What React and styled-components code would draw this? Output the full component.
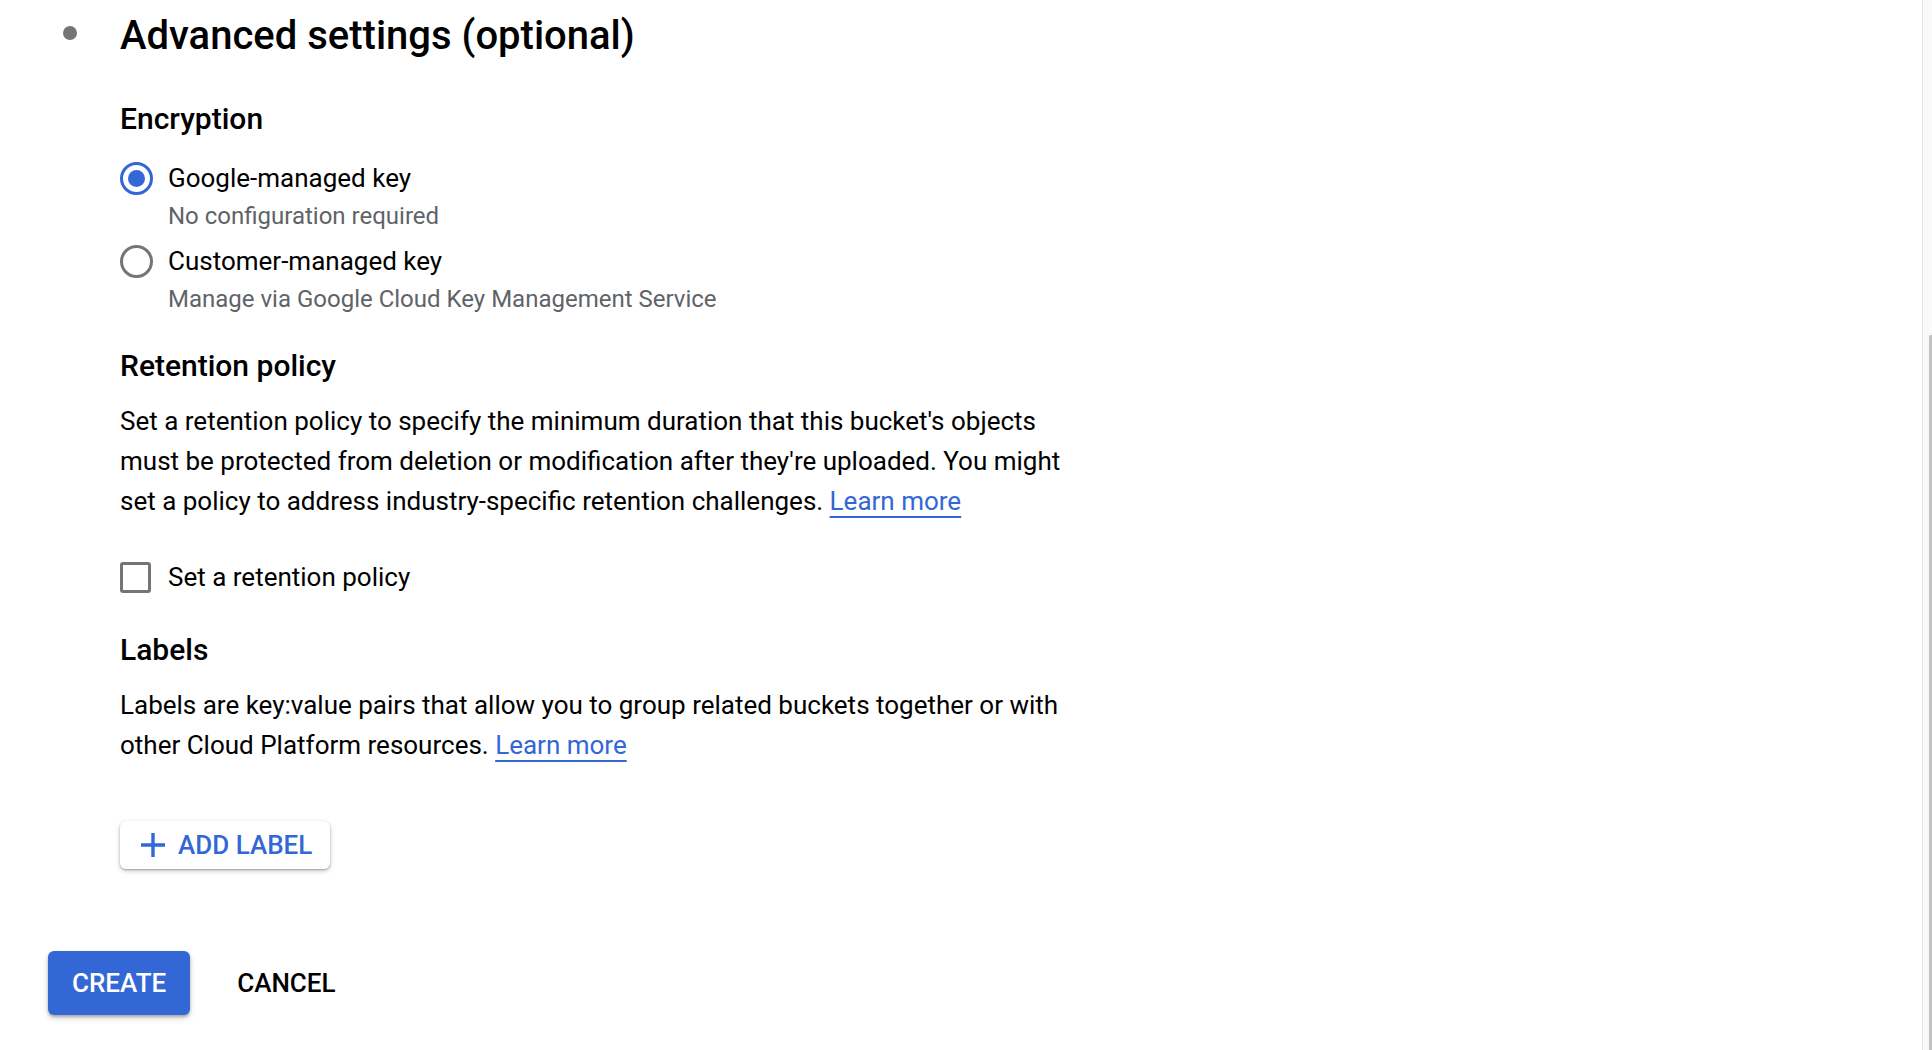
import React from "react";
import styled, { createGlobalStyle } from "styled-components";

const GlobalStyle = createGlobalStyle`
  html, body {
    margin: 0;
    padding: 0;
    background: #ffffff;
  }
  body {
    font-family: Roboto, "Noto Sans", "Liberation Sans", sans-serif;
    color: #000000;
    overflow: hidden;
  }
`;

const Page = styled.div`
  display: flex;
  min-height: 100vh;
`;

const Main = styled.main`
  flex: 1;
  padding-top: 12px;
`;

const StepHeader = styled.div`
  display: flex;
  align-items: flex-start;
`;

const Bullet = styled.span`
  width: 14px;
  height: 14px;
  border-radius: 50%;
  background: #757575;
  margin: 14px 43px 0 63px;
  flex-shrink: 0;
`;

const Title = styled.h2`
  margin: 0;
  font-size: 40px;
  font-weight: 500;
  line-height: 48px;
  color: #000000;
`;

const Body = styled.div`
  padding-left: 120px;
`;

const SectionTitle = styled.h3`
  margin: ${(p) => p.$top}px 0 0;
  font-size: 30px;
  font-weight: 500;
  line-height: 40px;
`;

const RadioGroup = styled.div`
  margin-top: 20px;
  display: flex;
  flex-direction: column;
  gap: 8px;
`;

const Option = styled.label`
  display: grid;
  grid-template-columns: 48px 1fr;
  align-items: start;
`;

const RadioMark = styled.span`
  width: 33px;
  height: 33px;
  box-sizing: border-box;
  border-radius: 50%;
  border: 3.5px solid ${(p) => (p.$checked ? "#3367d6" : "#757575")};
  margin-top: 3px;
  display: flex;
  align-items: center;
  justify-content: center;

  &::after {
    content: "";
    width: 17px;
    height: 17px;
    border-radius: 50%;
    background: #3367d6;
    display: ${(p) => (p.$checked ? "block" : "none")};
  }
`;

const OptionText = styled.div`
  display: flex;
  flex-direction: column;
`;

const OptionLabel = styled.span`
  font-size: 26px;
  line-height: 39px;
  color: #000000;
`;

const OptionHint = styled.span`
  font-size: 24px;
  line-height: 36px;
  color: #5f6368;
`;

const Paragraph = styled.p`
  margin: ${(p) => p.$top}px 0 0;
  width: 950px;
  font-size: 26px;
  line-height: 40px;
  color: #000000;
`;

const Link = styled.a`
  color: #3367d6;
  text-decoration: underline;
  text-decoration-thickness: 2px;
  text-underline-offset: 6px;
  cursor: pointer;
`;

const CheckRow = styled.label`
  margin-top: 36px;
  display: flex;
  align-items: center;
  height: 40px;
`;

const CheckBox = styled.span`
  width: 31px;
  height: 31px;
  box-sizing: border-box;
  border: 3.5px solid #757575;
  border-radius: 3px;
  margin-right: 17px;
`;

const CheckText = styled.span`
  font-size: 26px;
  line-height: 40px;
`;

const AddButton = styled.button`
  margin-top: 56px;
  height: 48px;
  width: 210px;
  display: flex;
  align-items: center;
  gap: 13px;
  padding: 0 0 0 21px;
  border: none;
  border-radius: 6px;
  background: #ffffff;
  box-shadow: 0 1px 2px rgba(0, 0, 0, 0.25), 0 2px 5px rgba(0, 0, 0, 0.2);
  font-family: inherit;
  font-size: 26px;
  font-weight: 500;
  color: #3367d6;
  cursor: pointer;
`;

const Actions = styled.div`
  margin-top: 82px;
  padding-left: 48px;
  display: flex;
  align-items: center;
  gap: 23px;
`;

const ActionButton = styled.button`
  height: 64px;
  padding: 0 24px;
  border: none;
  border-radius: 6px;
  font-family: inherit;
  font-size: 26px;
  font-weight: 500;
  cursor: pointer;
  background: ${(p) => (p.$primary ? "#3367d6" : "transparent")};
  color: ${(p) => (p.$primary ? "#ffffff" : "#000000")};
  box-shadow: ${(p) =>
    p.$primary ? "0 2px 3px rgba(0,0,0,0.25), 0 3px 6px rgba(0,0,0,0.15)" : "none"};
`;

const ScrollTrack = styled.div`
  width: 9px;
  flex-shrink: 0;
  border-left: 1px solid #e6e6e6;
  background: #f9f9f9;
  display: flex;
  justify-content: flex-end;
`;

const ScrollThumb = styled.div`
  width: 3px;
  margin-top: 335px;
  background: #c1c1c1;
  border-radius: 2px 0 0 0;
`;

const PlusIcon = () => (
  <svg width="24" height="26" viewBox="0 0 24 26" fill="none">
    <path d="M12 1v24M0 13h24" stroke="#3367d6" strokeWidth="3.4" />
  </svg>
);

const options = [
  { label: "Google-managed key", hint: "No configuration required", checked: true },
  {
    label: "Customer-managed key",
    hint: "Manage via Google Cloud Key Management Service",
    checked: false,
  },
];

export default function App() {
  return (
    <Page>
      <GlobalStyle />
      <Main>
        <StepHeader>
          <Bullet />
          <Title>Advanced settings (optional)</Title>
        </StepHeader>
        <Body>
          <SectionTitle $top={39}>Encryption</SectionTitle>
          <RadioGroup>
            {options.map((o) => (
              <Option key={o.label}>
                <RadioMark $checked={o.checked} />
                <OptionText>
                  <OptionLabel>{o.label}</OptionLabel>
                  <OptionHint>{o.hint}</OptionHint>
                </OptionText>
              </Option>
            ))}
          </RadioGroup>

          <SectionTitle $top={29}>Retention policy</SectionTitle>
          <Paragraph $top={15}>
            Set a retention policy to specify the minimum duration that this bucket's objects
            must be protected from deletion or modification after they're uploaded. You might
            set a policy to address industry-specific retention challenges.{" "}
            <Link>Learn more</Link>
          </Paragraph>
          <CheckRow>
            <CheckBox />
            <CheckText>Set a retention policy</CheckText>
          </CheckRow>

          <SectionTitle $top={33}>Labels</SectionTitle>
          <Paragraph $top={15}>
            Labels are key:value pairs that allow you to group related buckets together or with
            other Cloud Platform resources. <Link>Learn more</Link>
          </Paragraph>
          <AddButton>
            <PlusIcon />
            ADD LABEL
          </AddButton>
        </Body>
        <Actions>
          <ActionButton $primary>CREATE</ActionButton>
          <ActionButton>CANCEL</ActionButton>
        </Actions>
      </Main>
      <ScrollTrack>
        <ScrollThumb />
      </ScrollTrack>
    </Page>
  );
}
